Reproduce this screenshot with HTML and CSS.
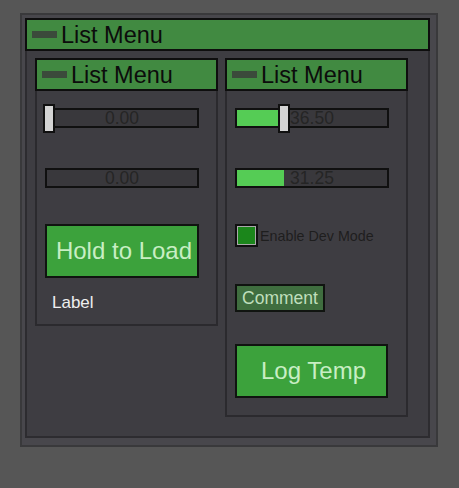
FILE: index.html
```html
<!DOCTYPE html>
<html>
<head>
<meta charset="utf-8">
<link rel="stylesheet" href="styles.css">
</head>
<body>
<div class="outer">
  <div class="frame">
    <div class="menu-head"><span class="grip"></span><span class="title">List Menu</span></div>
    <div class="frame-body">
      <div class="panel">
        <div class="menu-head"><span class="grip"></span><span class="title">List Menu</span></div>
        <div class="panel-body left-body">
          <div class="slider">
            <div class="track">
              <span class="value">0.00</span>
              <span class="knob" style="left:-4px"></span>
            </div>
          </div>
          <div class="track bar"><span class="value">0.00</span></div>
          <button class="btn big">Hold to Load</button>
          <div class="label">Label</div>
        </div>
      </div>
      <div class="panel">
        <div class="menu-head"><span class="grip"></span><span class="title">List Menu</span></div>
        <div class="panel-body right-body">
          <div class="slider">
            <div class="track">
              <span class="fill" style="width:43px"></span>
              <span class="value">36.50</span>
              <span class="knob" style="left:41px"></span>
            </div>
          </div>
          <div class="track bar">
            <span class="fill" style="width:47px"></span>
            <span class="value">31.25</span>
          </div>
          <label class="check">
            <span class="box"><span class="tick"></span></span>
            <span class="check-text">Enable Dev Mode</span>
          </label>
          <button class="btn small">Comment</button>
          <button class="btn big log">Log Temp</button>
        </div>
      </div>
    </div>
  </div>
</div>
</body>
</html>
```
FILE: styles.css
```css
body {
  margin: 0;
  background: #565656;
  font-family: "Liberation Sans", Arial, sans-serif;
}

.outer {
  margin: 13px 0 0 20px;
  width: 418px;
  height: 434px;
  box-sizing: border-box;
  border: 2px solid #39393b;
  background: #48474c;
  padding: 3px 6px 0 3px;
}

.frame {
  width: 405px;
}

.menu-head {
  height: 33px;
  box-sizing: border-box;
  border: 2px solid #0e0e0e;
  background: #418a41;
  display: flex;
  align-items: center;
  padding-left: 5px;
  gap: 4px;
}

.grip {
  width: 25px;
  height: 7px;
  background: #3b4a3b;
  flex: none;
}

.title {
  font-size: 23.5px;
  line-height: 1;
  color: #0c0c0c;
  padding-top: 2px;
}

.frame-body {
  border: 2px solid #2d2c30;
  border-top: none;
  background: #3e3d42;
  padding: 7px 20px 19px 8px;
  display: flex;
  gap: 7px;
  align-items: flex-start;
}

.panel {
  width: 183px;
  flex: none;
}

.panel-body {
  border: 2px solid #2b2a2e;
  border-top: none;
  padding: 13px 0 0 8px;
  display: flex;
  flex-direction: column;
  align-items: flex-start;
}

.left-body {
  padding-bottom: 11px;
}

.right-body {
  padding-bottom: 17px;
}

.slider {
  height: 28px;
  display: flex;
  align-items: center;
}

.track {
  position: relative;
  width: 154px;
  height: 20px;
  box-sizing: border-box;
  border: 2px solid #101010;
  background: #39383c;
  display: flex;
  align-items: center;
  justify-content: center;
}

.bar {
  margin-top: 36px;
}

.fill {
  position: absolute;
  left: 0;
  top: 0;
  bottom: 0;
  background: #55cc55;
}

.value {
  position: relative;
  font-size: 17.5px;
  line-height: 16px;
  color: #252525;
}

.knob {
  position: absolute;
  top: -6px;
  width: 12px;
  height: 29px;
  box-sizing: border-box;
  border: 2px solid #101010;
  background: #d4d4d4;
}

.btn {
  font-family: "Liberation Sans", Arial, sans-serif;
  border: 2px solid #101410;
  margin: 0;
  padding: 0 0 0 4px;
  box-sizing: border-box;
}

.big {
  margin-top: 36px;
  width: 154px;
  height: 54px;
  background: #3ca23c;
  color: #c8eec4;
  font-size: 24px;
}

.log {
  margin-top: 32px;
  width: 153px;
}

.small {
  margin-top: 37px;
  width: 90px;
  height: 28px;
  padding: 0;
  background: #3f6e3f;
  color: #bfdfbc;
  font-size: 17.5px;
}

.label {
  margin-top: 15px;
  height: 20px;
  padding-left: 7px;
  font-size: 17px;
  line-height: 20px;
  color: #efefef;
}

.check {
  margin-top: 36px;
  display: flex;
  align-items: center;
  gap: 2px;
  height: 23px;
}

.box {
  width: 23px;
  height: 23px;
  box-sizing: border-box;
  border: 2px solid #101010;
  background: #a9a9a9;
  padding: 1px;
  display: flex;
}

.tick {
  flex: 1;
  background: #1b861b;
}

.check-text {
  font-size: 14.3px;
  color: #1e1e1e;
}
```
